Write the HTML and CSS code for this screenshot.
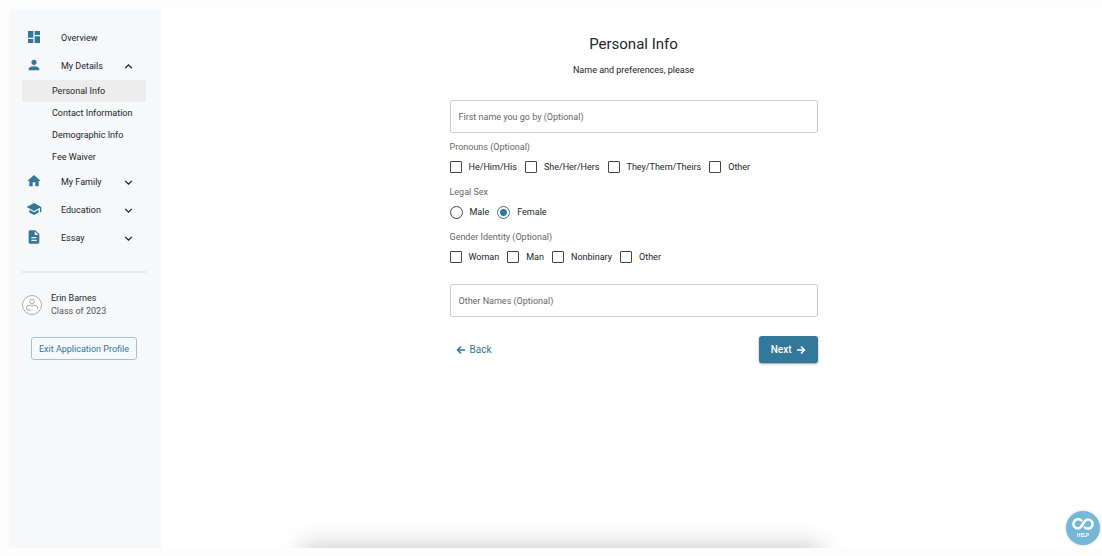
FILE: index.html
```html
<!DOCTYPE html>
<html lang="en">
<head>
    <meta charset="utf-8">
    <title>Personal Info</title>
    <link rel="stylesheet" href="styles.css">
</head>
<body>
    <div class="app">
        <aside class="sidebar">
            <nav>
                <a class="nav-item" href="#">
                    <svg class="nav-icon" viewBox="0 0 24 24"><path d="M3 13h8V3H3v10zm0 8h8v-6H3v6zm10 0h8V11h-8v10zm0-18v6h8V3h-8z"/></svg>
                    <span>Overview</span>
                </a>
                <button class="nav-item" type="button" aria-expanded="true">
                    <svg class="nav-icon" viewBox="0 0 24 24"><path d="M12 12c2.200 0 4-1.800 4-4s-1.800-4-4-4-4 1.800-4 4 1.800 4 4 4zm0 2c-2.700 0-8 1.300-8 4v2h16v-2c0-2.700-5.300-4-8-4z"/></svg>
                    <span>My Details</span>
                    <svg class="chevron" viewBox="0 0 24 24"><path d="M12 8l-6 6 1.400 1.400L12 10.800l4.600 4.600L18 14z"/></svg>
                </button>
                <div class="subnav">
                    <a class="subnav-item active" href="#">Personal Info</a>
                    <a class="subnav-item" href="#">Contact Information</a>
                    <a class="subnav-item" href="#">Demographic Info</a>
                    <a class="subnav-item" href="#">Fee Waiver</a>
                </div>
                <button class="nav-item" type="button">
                    <svg class="nav-icon" viewBox="0 0 24 24"><path d="M10 20v-6h4v6h5v-8h3L12 3 2 12h3v8z"/></svg>
                    <span>My Family</span>
                    <svg class="chevron" viewBox="0 0 24 24"><path d="M16.600 8.600L12 13.200 7.400 8.600 6 10l6 6 6-6z"/></svg>
                </button>
                <button class="nav-item" type="button">
                    <svg class="nav-icon" viewBox="0 0 24 24"><path d="M5 13.200v4L12 21l7-3.800v-4L12 17l-7-3.800zM12 3L1 9l11 6 9-4.900V17h2V9L12 3z"/></svg>
                    <span>Education</span>
                    <svg class="chevron" viewBox="0 0 24 24"><path d="M16.600 8.600L12 13.200 7.400 8.600 6 10l6 6 6-6z"/></svg>
                </button>
                <button class="nav-item" type="button">
                    <svg class="nav-icon" viewBox="0 0 24 24"><path d="M14 2H6c-1.100 0-2 .9-2 2v16c0 1.100.9 2 2 2h12c1.100 0 2-.9 2-2V8l-6-6zm2 16H8v-2h8v2zm0-4H8v-2h8v2zm-3-5V3.500L18.500 9H13z"/></svg>
                    <span>Essay</span>
                    <svg class="chevron" viewBox="0 0 24 24"><path d="M16.600 8.600L12 13.200 7.400 8.600 6 10l6 6 6-6z"/></svg>
                </button>
            </nav>
            <hr class="divider">
            <div class="profile">
                <svg class="avatar" viewBox="0 0 20 20">
                    <circle cx="10" cy="10" r="9.500"/>
                    <circle cx="10" cy="6.500" r="2.500"/>
                    <path d="M8 10.500H6.500a2 2 0 0 0-2 2V14a1 1 0 0 0 1 1H9M10.300 15h.7M12 10.500h1.500a2 2 0 0 1 2 2V14M8 10l2 1.500 2-1.500"/>
                </svg>
                <div>
                    <div class="profile-name">Erin Barnes</div>
                    <div class="profile-class">Class of 2023</div>
                </div>
            </div>
            <button class="exit-button" type="button">Exit Application Profile</button>
        </aside>

        <main class="content">
            <form class="form">
                <h1>Personal Info</h1>
                <p class="subtitle">Name and preferences, please</p>

                <input class="text-field" type="text" aria-label="First name you go by" placeholder="First name you go by (Optional)">

                <fieldset>
                    <legend>Pronouns (Optional)</legend>
                    <div class="options">
                        <label><input type="checkbox" name="pronouns">He/Him/His</label>
                        <label><input type="checkbox" name="pronouns">She/Her/Hers</label>
                        <label><input type="checkbox" name="pronouns">They/Them/Theirs</label>
                        <label><input type="checkbox" name="pronouns">Other</label>
                    </div>
                </fieldset>

                <fieldset>
                    <legend>Legal Sex</legend>
                    <div class="options">
                        <label><input type="radio" name="sex">Male</label>
                        <label><input type="radio" name="sex" checked>Female</label>
                    </div>
                </fieldset>

                <fieldset>
                    <legend>Gender Identity (Optional)</legend>
                    <div class="options">
                        <label><input type="checkbox" name="gender">Woman</label>
                        <label><input type="checkbox" name="gender">Man</label>
                        <label><input type="checkbox" name="gender">Nonbinary</label>
                        <label><input type="checkbox" name="gender">Other</label>
                    </div>
                </fieldset>

                <input class="text-field other-names" type="text" aria-label="Other Names" placeholder="Other Names (Optional)">

                <div class="actions">
                    <button class="back-button" type="button">
                        <svg class="arrow" viewBox="0 0 10 10"><path d="M9 5H1.500M5 1.500L1.500 5 5 8.500"/></svg>
                        Back
                    </button>
                    <button class="next-button" type="button">
                        Next
                        <svg class="arrow" viewBox="0 0 10 10"><path d="M1 5h7.500M5 1.500L8.500 5 5 8.500"/></svg>
                    </button>
                </div>
            </form>
        </main>
        <div class="bottom-shadow"></div>
    </div>

    <button class="help-button" type="button">
        <svg class="help-icon" viewBox="0 0 22 12"><path d="M9.300 2.400A4.700 4.700 0 1 0 6 10.600C10.500 10.600 11 1.400 16 1.400a4.600 4.600 0 1 1-3.200 7.900"/></svg>
        HELP
    </button>
</body>
</html>
```
FILE: styles.css
```css
* {
    box-sizing: border-box;
}

body {
    margin: 0;
    padding: 9px 0 8px 9px;
    min-height: 100vh;
    display: flex;
    background-color: #fdfdfd;
    font-family: Roboto, sans-serif;
    font-size: 9px;
    color: #212529;
}

button {
    font: inherit;
    color: inherit;
    background: none;
    border: none;
    padding: 0;
    cursor: pointer;
}

a {
    color: inherit;
    text-decoration: none;
}

.app {
    position: relative;
    flex: 1;
    display: flex;
    background-color: #fff;
    overflow: hidden;
}

/* Sidebar */
.sidebar {
    width: 152px;
    padding: 15px 15px 14px 13px;
    background-color: #f6f8fa;
}

.nav-item {
    display: flex;
    align-items: center;
    width: 100%;
    height: 28px;
    padding-left: 4px;
    text-align: left;
}

.nav-item span {
    flex: 1;
}

.nav-icon {
    width: 16px;
    height: 16px;
    margin-right: 19px;
    margin-bottom: 2px;
    fill: #337799;
}

.chevron {
    width: 15px;
    height: 15px;
    margin-right: 10px;
    fill: #212529;
}

.subnav-item {
    display: block;
    height: 22px;
    line-height: 22px;
    padding-left: 30px;
}

.subnav-item.active {
    background-color: #ededee;
}

.divider {
    height: 2px;
    margin: 19px 0;
    border: none;
    background-color: #e6e8ea;
}

.profile {
    display: flex;
    align-items: center;
    gap: 9px;
    line-height: 13px;
}

.avatar {
    width: 20px;
    height: 20px;
    fill: #fff;
    stroke: #aaa;
}

.profile-class {
    color: #555;
}

.exit-button {
    display: block;
    height: 23px;
    margin: 19px auto 0;
    padding: 0 7px;
    border: 1px solid #a3c2d1;
    border-radius: 3px;
    color: #337799;
}

/* Form */
.content {
    flex: 1;
    padding: 25px 0 20px 4px;
}

.form {
    max-width: 368px;
    margin: 0 auto;
}

h1 {
    margin: 0;
    font-size: 15px;
    font-weight: 400;
    line-height: 20px;
    text-align: center;
}

.subtitle {
    margin: 10px 0 24px;
    line-height: 12px;
    text-align: center;
}

.text-field {
    display: block;
    width: 100%;
    height: 33px;
    padding: 0 8px;
    border: 1px solid #ccc;
    border-radius: 3px;
    font: inherit;
}

.text-field::placeholder {
    color: #666;
    opacity: 1;
}

fieldset {
    margin: 8px 0 0;
    padding: 0;
    border: none;
}

fieldset + fieldset {
    margin-top: 12px;
}

legend {
    padding: 0;
    line-height: 12px;
    color: #666;
}

.options {
    display: flex;
    gap: 8px;
    padding-top: 7px;
}

.options label {
    display: flex;
    align-items: center;
    gap: 7px;
    height: 14px;
}

.options input {
    appearance: none;
    width: 12px;
    height: 12px;
    margin: 0;
    border: 1px solid #444;
    border-radius: 1px;
}

.options input[type="radio"] {
    width: 13px;
    height: 13px;
    border-radius: 50%;
}

.options input[type="radio"]:checked {
    border-color: #337799;
    background: radial-gradient(circle, #337799 3px, #fff 4px);
}

.other-names {
    margin-top: 20px;
}

.actions {
    display: flex;
    justify-content: space-between;
    margin-top: 19px;
}

.actions button {
    display: flex;
    align-items: center;
    gap: 4px;
    height: 27px;
    font-size: 10px;
}

.arrow {
    width: 10px;
    height: 10px;
    fill: none;
    stroke: currentColor;
    stroke-width: 1.5;
}

.back-button {
    padding: 0 6px;
    color: #337799;
}

.actions .next-button {
    padding: 0 12px;
    border-radius: 3px;
    background-color: #337799;
    color: #fff;
    font-weight: 500;
    box-shadow: 0 1px 2px rgba(0, 0, 0, 0.4);
}

/* Shadow of the panel below the fold */
.bottom-shadow {
    position: absolute;
    top: 100%;
    left: 27%;
    right: 26%;
    height: 40px;
    box-shadow: 0 0 24px 3px rgba(0, 0, 0, 0.2);
}

.help-button {
    position: fixed;
    right: 2px;
    bottom: 11px;
    width: 34px;
    height: 34px;
    border-radius: 50%;
    background-color: #74b7d6;
    color: #fff;
    font-size: 5px;
    font-weight: 700;
    line-height: 6px;
    box-shadow: 0 0 3px rgba(0, 0, 0, 0.2);
}

.help-icon {
    display: block;
    width: 22px;
    height: 12px;
    margin: 0 auto 2px;
    fill: none;
    stroke: #fff;
    stroke-width: 2.5;
    stroke-linecap: round;
}
```
